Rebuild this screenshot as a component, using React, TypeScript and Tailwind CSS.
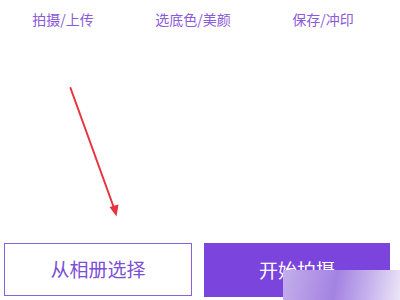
import React from "react";

export default function App() {
  return (
    <div
      className="relative w-[400px] h-[300px] bg-white overflow-hidden"
      style={{ fontFamily: '"Noto Sans CJK SC", "Noto Sans", sans-serif' }}
    >
      <div className="flex flex-col h-full">
        <div className="grid grid-cols-3 w-[390px] ml-[-2px] h-[38px] items-center text-[14px] leading-none text-[#8a5ad8]">
          <div className="text-center">拍摄/上传</div>
          <div className="text-center">选底色/美颜</div>
          <div className="text-center">保存/冲印</div>
        </div>
        <div className="flex-1" />
        <div className="flex gap-3 pl-1 pr-[10px] pb-[4px] h-[57px]">
          <div className="flex-1 h-[53px] border border-[#8a62d8] flex items-center justify-center text-[19px] text-[#7b4fd6]">
            从相册选择
          </div>
          <div className="flex-1 h-[54px] bg-[#7b44dc] flex items-center justify-center text-[19px] text-white">
            开始拍摄
          </div>
        </div>
      </div>
      <svg
        className="absolute left-0 top-0 pointer-events-none"
        width="400"
        height="300"
        viewBox="0 0 400 300"
      >
        <line x1="70.5" y1="88" x2="114" y2="208" stroke="#ea3340" strokeWidth="2" strokeLinecap="round" />
        <polygon points="116.5,216.5 109.5,207 118.5,204.5" fill="#ea3340" />
      </svg>
      <div className="absolute left-[283px] top-[270px] w-[117px] h-[30px] bg-[linear-gradient(100deg,#c4aeeb_0%,#a383e2_45%,#c9b6ee_75%,#ece6f7_100%)]" />
    </div>
  );
}
